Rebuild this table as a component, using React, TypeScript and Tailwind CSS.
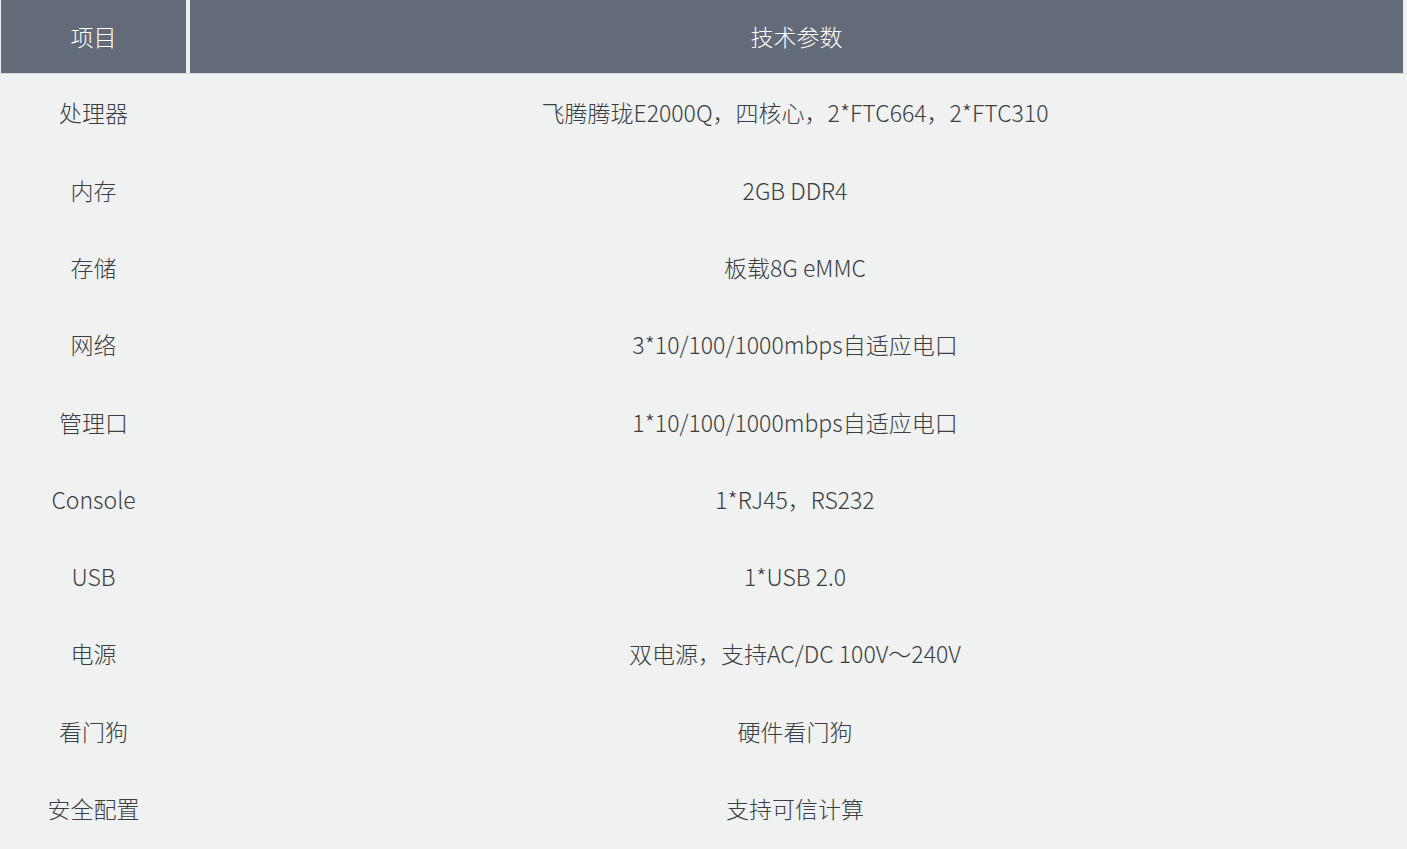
import React from 'react';

const rows = [
  { item: "处理器", spec: "飞腾腾珑E2000Q，四核心，2*FTC664，2*FTC310" },
  { item: "内存", spec: "2GB DDR4" },
  { item: "存储", spec: "板载8G eMMC" },
  { item: "网络", spec: "3*10/100/1000mbps自适应电口" },
  { item: "管理口", spec: "1*10/100/1000mbps自适应电口" },
  { item: "Console", spec: "1*RJ45，RS232" },
  { item: "USB", spec: "1*USB 2.0" },
  { item: "电源", spec: "双电源，支持AC/DC 100V～240V" },
  { item: "看门狗", spec: "硬件看门狗" },
  { item: "安全配置", spec: "支持可信计算" },
];

export default function App() {
  return (
    <div className="w-[1407px] h-[849px] overflow-hidden bg-[#f0f1f1] font-['Noto_Sans_CJK_SC',sans-serif] font-light text-[#3a3d42]">
      {/* Header */}
      <div className="flex h-[74px] pl-[1px] pr-[4px] border-b border-[#d6d9dd]">
        <div className="w-[189px] flex items-center justify-center bg-[#646b78] text-white text-[23px] border-r-[4px] border-[#eceeef]">
          项目
        </div>
        <div className="flex-1 flex items-center justify-center bg-[#646b78] text-white text-[23px]">
          技术参数
        </div>
      </div>

      {/* Body */}
      {rows.map((row) => (
        <div key={row.item} className="flex h-[77.3px] items-center text-[23px]">
          <div className="w-[187px] text-center">{row.item}</div>
          <div className="flex-1 text-center pr-[4px]">{row.spec}</div>
        </div>
      ))}
    </div>
  );
}
